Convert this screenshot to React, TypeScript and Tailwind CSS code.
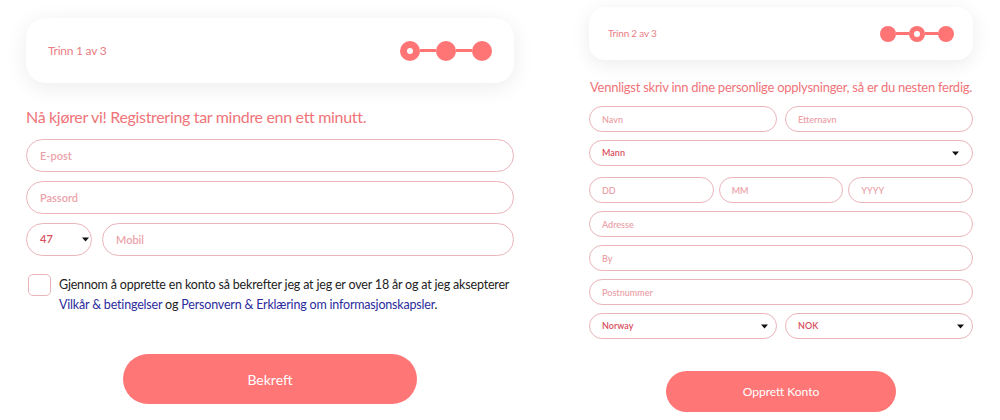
import React from 'react';

const Caret = ({ className = '' }: { className?: string }) => (
  <svg viewBox="0 0 10 6" className={`w-[7px] h-[5px] ${className}`}>
    <path d="M0 0 L10 0 L5 6 Z" fill="#111" />
  </svg>
);

const Stepper = ({ active, size, gap }: { active: number; size: string; gap: string }) => (
  <div className="flex items-center">
    {[0, 1, 2].map((i) => (
      <React.Fragment key={i}>
        {i > 0 && <div className={`${gap} h-[3px] bg-[#ff7474]`} />}
        <div className={`${size} rounded-full bg-[#ff7474] flex items-center justify-center`}>
          {i === active && <div className="w-[6px] h-[6px] rounded-full bg-white" />}
        </div>
      </React.Fragment>
    ))}
  </div>
);

const Field = ({ placeholder, className = '', small = false }: { placeholder: string; className?: string; small?: boolean }) => (
  <input
    placeholder={placeholder}
    className={`min-w-0 rounded-full border border-[#e9b4ba] bg-white outline-none font-semibold text-[#d9505e] placeholder:text-[#eba3aa] ${
      small ? 'h-[26px] px-[12px] text-[9px]' : 'h-[33px] px-[13px] text-[11px]'
    } ${className}`}
  />
);

const SelectBox = ({ value, className = '', small = false, caretPad = 'pr-[2px]' }: { value: string; className?: string; small?: boolean; caretPad?: string }) => (
  <div
    className={`flex items-center justify-between rounded-full border border-[#e9b4ba] font-semibold text-[#d9505e] ${
      small ? 'h-[26px] pl-[12px] text-[9px]' : 'h-[33px] pl-[13px] text-[11px]'
    } ${caretPad} ${className}`}
  >
    <span>{value}</span>
    <Caret className={small ? 'w-[7px] h-[5px]' : ''} />
  </div>
);

export default function App() {
  return (
    <div className="min-h-screen bg-white flex font-['Lato',sans-serif]">
      {/* Step 1 */}
      <div className="ml-[26px] w-[488px] pt-[18px] flex flex-col">
        <div className="h-[65px] rounded-[20px] bg-white shadow-[0_4px_22px_rgba(0,0,0,0.08)] flex items-center justify-between px-[22px]">
          <span className="text-[12px] text-[#ea7d84] tracking-[-0.02em]">Trinn 1 av 3</span>
          <Stepper active={0} size="w-[20px] h-[20px]" gap="w-[16px]" />
        </div>

        <h2 className="mt-[24px] text-[16px] leading-[20px] text-[#ef7479] tracking-[-0.02em]">
          Nå kjører vi! Registrering tar mindre enn ett minutt.
        </h2>

        <div className="mt-[12px] flex flex-col gap-[9px]">
          <Field placeholder="E-post" />
          <Field placeholder="Passord" />
          <div className="flex gap-[10px]">
            <SelectBox value="47" className="w-[66px] shrink-0" />
            <Field placeholder="Mobil" className="flex-1" />
          </div>
        </div>

        <div className="mt-[18px] flex gap-[8px]">
          <div className="w-[23px] h-[22px] shrink-0 ml-[2px] rounded-[5px] border border-[#e9b4ba] bg-white" />
          <p className="mt-[1px] text-[12.5px] leading-[20px] text-[#222] tracking-[-0.015em]">
            Gjennom å opprette en konto så bekrefter jeg at jeg er over 18 år og at jeg aksepterer{' '}
            <a className="text-[#2b2b9c]">Vilkår &amp; betingelser</a> og{' '}
            <a className="text-[#2b2b9c]">Personvern &amp; Erklæring om informasjonskapsler</a>.
          </p>
        </div>

        <button className="mt-[39px] ml-[97px] w-[294px] h-[50px] rounded-full bg-[#ff7676] text-white text-[14px]">
          Bekreft
        </button>
      </div>

      {/* Step 2 */}
      <div className="ml-[75px] w-[384px] pt-[7px] flex flex-col">
        <div className="h-[53px] rounded-[16px] bg-white shadow-[0_4px_20px_rgba(0,0,0,0.08)] flex items-center justify-between px-[19px]">
          <span className="text-[10px] text-[#ea7d84] tracking-[-0.02em]">Trinn 2 av 3</span>
          <Stepper active={1} size="w-[16px] h-[16px]" gap="w-[13px]" />
        </div>

        <p className="mt-[18px] ml-[1px] text-[13px] leading-[18px] text-[#ef7479] tracking-[-0.02em] whitespace-nowrap">
          Vennligst skriv inn dine personlige opplysninger, så er du nesten ferdig.
        </p>

        <div className="mt-[10px] flex flex-col gap-[8px]">
          <div className="flex gap-[8px]">
            <Field small placeholder="Navn" className="flex-1" />
            <Field small placeholder="Etternavn" className="flex-1" />
          </div>
          <SelectBox small value="Mann" caretPad="pr-[13px]" />
          <div className="mt-[3px] flex gap-[5px]">
            <Field small placeholder="DD" className="flex-1" />
            <Field small placeholder="MM" className="flex-1" />
            <Field small placeholder="YYYY" className="flex-1" />
          </div>
          <Field small placeholder="Adresse" />
          <Field small placeholder="By" />
          <Field small placeholder="Postnummer" />
          <div className="flex gap-[8px]">
            <SelectBox small value="Norway" caretPad="pr-[8px]" className="flex-1" />
            <SelectBox small value="NOK" caretPad="pr-[8px]" className="flex-1" />
          </div>
        </div>

        <button className="mt-[32px] ml-[77px] w-[230px] h-[41px] rounded-full bg-[#ff7676] text-white text-[12px]">
          Opprett Konto
        </button>
      </div>
    </div>
  );
}
